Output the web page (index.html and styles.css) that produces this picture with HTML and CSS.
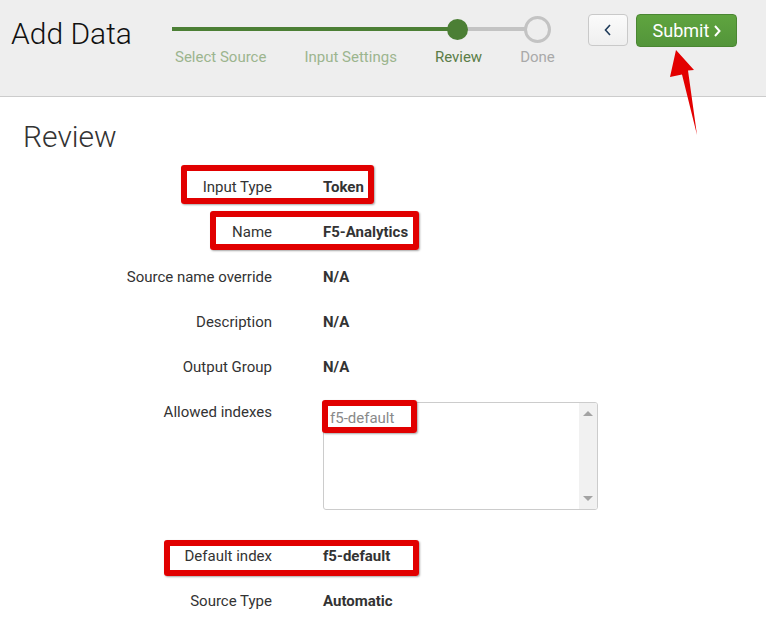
FILE: index.html
```html
<!DOCTYPE html>
<html>
<head>
<meta charset="utf-8">
<link rel="stylesheet" href="styles.css">
</head>
<body>
<div class="page">
  <header class="header">
    <h1 class="title">Add Data</h1>
    <div class="steps">
      <div class="bar">
        <div class="seg seg-done"></div>
        <div class="dot"></div>
        <div class="seg seg-todo"></div>
        <div class="ring"></div>
      </div>
      <div class="labels">
        <span class="step done">Select Source</span>
        <span class="step done">Input Settings</span>
        <span class="step current">Review</span>
        <span class="step todo">Done</span>
      </div>
    </div>
    <div class="actions">
      <button class="btn btn-back"><svg width="10" height="14" viewBox="0 0 10 14"><path d="M7 2 L2.5 7 L7 12" fill="none" stroke="#1f3b5a" stroke-width="1.6"/></svg></button>
      <button class="btn btn-submit">Submit <svg width="9" height="14" viewBox="0 0 9 14"><path d="M2 2 L6.5 7 L2 12" fill="none" stroke="#fff" stroke-width="2"/></svg></button>
    </div>
  </header>

  <main class="content">
    <h2 class="heading">Review</h2>
    <div class="form">
      <div class="label">Input Type</div><div class="value">Token</div>
      <div class="label">Name</div><div class="value">F5-Analytics</div>
      <div class="label">Source name override</div><div class="value">N/A</div>
      <div class="label">Description</div><div class="value">N/A</div>
      <div class="label">Output Group</div><div class="value">N/A</div>
      <div class="label">Allowed indexes</div>
      <div class="listbox">
        <div class="listbox-items"><div class="list-item">f5-default</div></div>
        <div class="scroll">
          <span class="tri-up"></span>
          <span class="tri-down"></span>
        </div>
      </div>
      <div class="label">Default index</div><div class="value">f5-default</div>
      <div class="label">Source Type</div><div class="value">Automatic</div>
    </div>
  </main>

  <div class="mark mark-1"></div>
  <div class="mark mark-2"></div>
  <div class="mark mark-3"></div>
  <div class="mark mark-4"></div>
  <svg class="arrow" width="40" height="100" viewBox="660 45 40 100">
    <polygon points="676,50 694,70 688,70.5 697,135 682,74.5 670,77" fill="#e30000"/>
  </svg>
</div>
</body>
</html>
```

FILE: styles.css
```css
* { box-sizing: border-box; }
html, body { margin: 0; padding: 0; background: #fff; }
body {
  font-family: Roboto, "Liberation Sans", Arial, sans-serif;
  color: #333;
  width: 766px;
  height: 636px;
  overflow: hidden;
}
.page { position: relative; width: 766px; height: 636px; }

.header {
  height: 97px;
  background: #eeeeee;
  border-bottom: 1px solid #cccccc;
  display: flex;
  align-items: flex-start;
}
.title {
  margin: 16px 0 0 11px;
  font-size: 30px;
  font-weight: 300;
  line-height: 36px;
  color: #111;
  width: 161px;
  flex-shrink: 0;
}
.steps {
  margin-top: 16px;
  width: 380px;
  flex-shrink: 0;
}
.bar {
  display: flex;
  align-items: center;
  height: 26px;
}
.seg { height: 4px; }
.seg-done { width: 276px; background: #4c7f35; }
.seg-todo { width: 58px; background: #c3c3c3; }
.dot { width: 21px; height: 21px; border-radius: 50%; background: #4c7f35; margin: 0 -1px; position: relative; }
.ring { width: 27px; height: 27px; border-radius: 50%; border: 3.5px solid #c3c3c3; background: #eee; margin-left: -1px; }
.labels {
  display: flex;
  gap: 38px;
  margin-left: 3px;
  margin-top: 5px;
  font-size: 15px;
  line-height: 20px;
  white-space: nowrap;
  width: max-content;
}
.step { flex-shrink: 0; }
.step.done { color: #9cb58e; }
.step.current { color: #5b7d47; }
.step.todo { color: #a9a9a9; }

.actions {
  margin: 14px 0 0 36px;
  display: flex;
  gap: 8px;
  align-items: flex-start;
  flex-shrink: 0;
}
.btn {
  font-family: Roboto, "Liberation Sans", Arial, sans-serif;
  border-radius: 4px;
  cursor: pointer;
  display: flex;
  align-items: center;
  justify-content: center;
  padding: 0;
}
.btn-back {
  width: 40px;
  height: 32px;
  background: linear-gradient(#fbfbfb, #efefef);
  border: 1px solid #c9c9c9;
}
.btn-submit {
  width: 101px;
  height: 33px;
  background: linear-gradient(#5fa43f, #53953a);
  border: 1px solid #4a8632;
  color: #fff;
  font-size: 18px;
  gap: 4px;
  padding-left: 2px;
}

.content { padding: 0; }
.heading {
  margin: 22px 0 0 23px;
  font-size: 30px;
  font-weight: 300;
  line-height: 36px;
  color: #333;
}
.form {
  margin-top: 22px;
  display: grid;
  grid-template-columns: 272px 1fr;
  column-gap: 51px;
  row-gap: 25px;
  font-size: 15px;
  line-height: 20px;
}
.label { text-align: right; color: #333; }
.value { font-weight: 700; color: #333; }

.listbox {
  width: 275px;
  height: 108px;
  margin: 0 0 11px;
  border: 1px solid #cccccc;
  border-radius: 3px;
  display: flex;
  overflow: hidden;
}
.listbox-items { flex: 1; padding: 5px 0 0 6px; }
.list-item { color: #8a8a8a; font-size: 15px; line-height: 20px; }
.scroll {
  width: 18px;
  background: #f1f1f1;
  display: flex;
  flex-direction: column;
  justify-content: space-between;
  align-items: center;
  padding: 8px 0 8px;
}
.tri-up, .tri-down { width: 0; height: 0; border-left: 5px solid transparent; border-right: 5px solid transparent; }
.tri-up { border-bottom: 5px solid #a3a3a3; }
.tri-down { border-top: 5px solid #a3a3a3; }

.mark {
  position: absolute;
  border: 6px solid #e10000;
  border-radius: 3px;
  box-shadow: 1px 1px 2px rgba(0,0,0,0.35);
}
.mark-1 { left: 181px; top: 165px; width: 193px; height: 39px; }
.mark-2 { left: 210px; top: 211px; width: 209px; height: 39px; }
.mark-3 { left: 322px; top: 400px; width: 95px; height: 33px; }
.mark-4 { left: 164px; top: 540px; width: 255px; height: 36px; }

.arrow { position: absolute; left: 660px; top: 45px; }
```
